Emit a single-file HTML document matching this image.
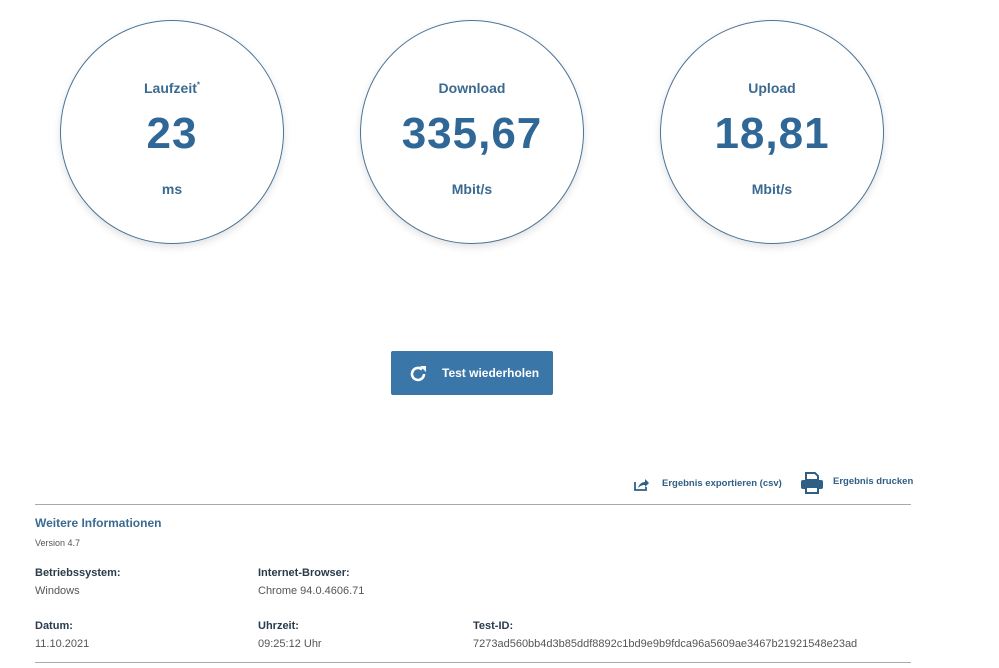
<!DOCTYPE html>
<html><head><meta charset="utf-8"><style>
body{margin:0;width:999px;height:668px;background:#fff;font-family:"Liberation Sans",sans-serif;position:relative;overflow:hidden;color:#333}
.c{position:absolute;top:20px;width:222px;height:222px;border:1.5px solid #4a7396;border-radius:50%;box-shadow:0 3px 8px rgba(0,0,0,0.12);text-align:center;color:#2f6796}
.c .l{position:absolute;top:59px;width:100%;font-size:14px;font-weight:bold;color:#3b6a91}
.c .v{position:absolute;top:88px;width:100%;font-size:44px;font-weight:bold;letter-spacing:1px}
.c .u{position:absolute;top:160px;width:100%;font-size:14px;font-weight:bold;color:#3b6a91}
.btn{position:absolute;left:391px;top:351px;width:162px;height:44px;background:#3a77a8;border-radius:2px;color:#fff;font-size:12px;font-weight:bold}
.a{position:absolute;font-size:9.5px;font-weight:bold;color:#2f5f85}
.hr{position:absolute;left:35px;width:876px;height:1px;background:#aaa}
.t{position:absolute;font-size:11px}
.b{font-weight:bold;color:#2a3b4a}
</style></head><body>
<div class="c" style="left:60px"><div class="l">Laufzeit<sup style="font-size:8px">*</sup></div><div class="v">23</div><div class="u">ms</div></div>
<div class="c" style="left:360px"><div class="l">Download</div><div class="v">335,67</div><div class="u">Mbit/s</div></div>
<div class="c" style="left:660px"><div class="l">Upload</div><div class="v">18,81</div><div class="u">Mbit/s</div></div>
<div class="btn">
<svg style="position:absolute;left:17px;top:13px" width="20" height="20" viewBox="0 0 20 20"><path d="M16 10a6 6 0 1 1-2-4.5" fill="none" stroke="#fff" stroke-width="2.6"/><path d="M12 2h6v6z" fill="#fff"/></svg>
<span style="position:absolute;left:51px;top:15px">Test wiederholen</span></div>
<svg style="position:absolute;left:634px;top:477px" width="16" height="14" viewBox="0 0 16 14"><path d="M1 5v8h11V10" fill="none" stroke="#2f5f85" stroke-width="1.8"/><path d="M4 11c1-4 4-6 7-6V2l4 4-4 4V8c-3 0-5 1-7 3z" fill="#2f5f85"/></svg>
<div class="a" style="left:662px;top:478px">Ergebnis exportieren (csv)</div>
<svg style="position:absolute;left:801px;top:472px" width="22" height="22" viewBox="0 0 22 22"><path d="M5 1h9l3 3v4H5z" fill="none" stroke="#2f5f85" stroke-width="2"/><rect x="0" y="8" width="22" height="9" rx="2" fill="#2f5f85"/><rect x="5" y="15" width="12" height="6" fill="#fff" stroke="#2f5f85" stroke-width="2"/></svg>
<div class="a" style="left:833px;top:476px">Ergebnis drucken</div>
<div class="hr" style="top:504px"></div>
<div class="t" style="left:35px;top:516px;font-size:12px;font-weight:bold;color:#3b6a91">Weitere Informationen</div>
<div class="t" style="left:35px;top:538px;font-size:9px;color:#555">Version 4.7</div>
<div class="t b" style="left:35px;top:567px">Betriebssystem:</div>
<div class="t" style="left:35px;top:585px;color:#555">Windows</div>
<div class="t b" style="left:258px;top:567px">Internet-Browser:</div>
<div class="t" style="left:258px;top:585px;color:#555">Chrome 94.0.4606.71</div>
<div class="t b" style="left:35px;top:620px">Datum:</div>
<div class="t" style="left:35px;top:638px;color:#555">11.10.2021</div>
<div class="t b" style="left:258px;top:620px">Uhrzeit:</div>
<div class="t" style="left:258px;top:638px;color:#555">09:25:12 Uhr</div>
<div class="t b" style="left:473px;top:620px">Test-ID:</div>
<div class="t" style="left:473px;top:638px;color:#555;font-size:11px">7273ad560bb4d3b85ddf8892c1bd9e9b9fdca96a5609ae3467b21921548e23ad</div>
<div class="hr" style="top:662px"></div>
</body></html>
